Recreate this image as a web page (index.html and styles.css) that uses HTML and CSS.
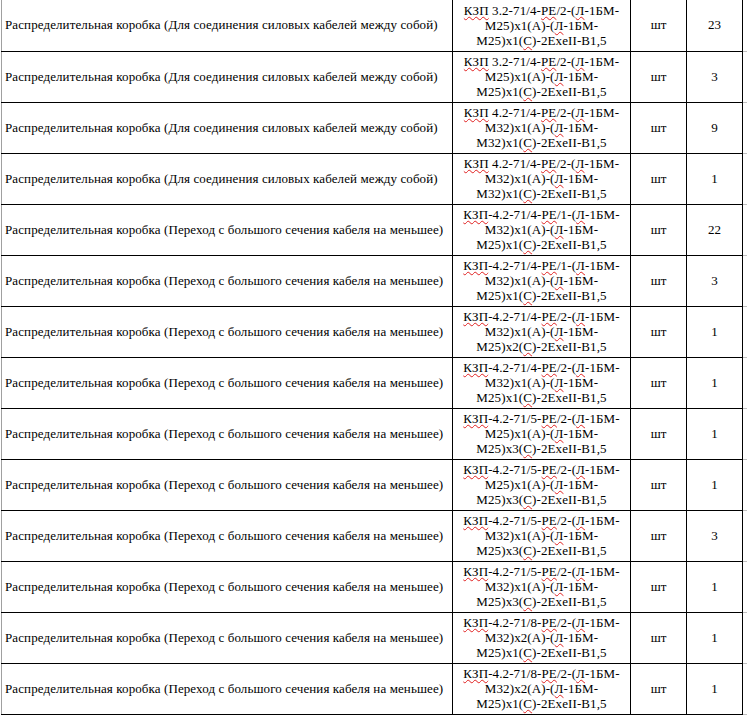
FILE: index.html
```html
<!DOCTYPE html>
<html lang="ru">
<head>
    <meta charset="UTF-8">
    <title>Спецификация</title>
    <link rel="stylesheet" href="styles.css">
</head>
<body>
    <table class="spec">
        <colgroup>
            <col class="c-name">
            <col class="c-code">
            <col class="c-unit">
            <col class="c-qty">
            <col class="c-tail">
        </colgroup>
        <tbody>
            <tr>
                <td class="name">Распределительная коробка (Для соединения силовых кабелей между собой)</td>
                <td class="code"><span class="sp">КЗП</span> 3.2-71/4-<span class="sp">РЕ</span>/2-(<span class="sp">Л</span>-1БМ-<br>М25)х1(А)-(<span class="sp">Л</span>-1БМ-<br>М25)х1(<span class="sp">С</span>)-2ExeII-B1,5</td>
                <td class="unit">шт</td>
                <td class="qty">23</td>
                <td class="tail"></td>
            </tr>
            <tr>
                <td class="name">Распределительная коробка (Для соединения силовых кабелей между собой)</td>
                <td class="code"><span class="sp">КЗП</span> 3.2-71/4-<span class="sp">РЕ</span>/2-(<span class="sp">Л</span>-1БМ-<br>М25)х1(А)-(<span class="sp">Л</span>-1БМ-<br>М25)х1(<span class="sp">С</span>)-2ExeII-B1,5</td>
                <td class="unit">шт</td>
                <td class="qty">3</td>
                <td class="tail"></td>
            </tr>
            <tr>
                <td class="name">Распределительная коробка (Для соединения силовых кабелей между собой)</td>
                <td class="code"><span class="sp">КЗП</span> 4.2-71/4-<span class="sp">РЕ</span>/2-(<span class="sp">Л</span>-1БМ-<br>М32)х1(А)-(<span class="sp">Л</span>-1БМ-<br>М32)х1(<span class="sp">С</span>)-2ExeII-B1,5</td>
                <td class="unit">шт</td>
                <td class="qty">9</td>
                <td class="tail"></td>
            </tr>
            <tr>
                <td class="name">Распределительная коробка (Для соединения силовых кабелей между собой)</td>
                <td class="code"><span class="sp">КЗП</span> 4.2-71/4-<span class="sp">РЕ</span>/2-(<span class="sp">Л</span>-1БМ-<br>М32)х1(А)-(<span class="sp">Л</span>-1БМ-<br>М32)х1(<span class="sp">С</span>)-2ExeII-B1,5</td>
                <td class="unit">шт</td>
                <td class="qty">1</td>
                <td class="tail"></td>
            </tr>
            <tr>
                <td class="name">Распределительная коробка (Переход с большого сечения кабеля на меньшее)</td>
                <td class="code"><span class="sp">КЗП</span>-4.2-71/4-<span class="sp">РЕ</span>/1-(<span class="sp">Л</span>-1БМ-<br>М32)х1(А)-(<span class="sp">Л</span>-1БМ-<br>М25)х1(<span class="sp">С</span>)-2ExeII-B1,5</td>
                <td class="unit">шт</td>
                <td class="qty">22</td>
                <td class="tail"></td>
            </tr>
            <tr>
                <td class="name">Распределительная коробка (Переход с большого сечения кабеля на меньшее)</td>
                <td class="code"><span class="sp">КЗП</span>-4.2-71/4-<span class="sp">РЕ</span>/1-(<span class="sp">Л</span>-1БМ-<br>М32)х1(А)-(<span class="sp">Л</span>-1БМ-<br>М25)х1(<span class="sp">С</span>)-2ExeII-B1,5</td>
                <td class="unit">шт</td>
                <td class="qty">3</td>
                <td class="tail"></td>
            </tr>
            <tr>
                <td class="name">Распределительная коробка (Переход с большого сечения кабеля на меньшее)</td>
                <td class="code"><span class="sp">КЗП</span>-4.2-71/4-<span class="sp">РЕ</span>/2-(<span class="sp">Л</span>-1БМ-<br>М32)х1(А)-(<span class="sp">Л</span>-1БМ-<br>М25)х2(<span class="sp">С</span>)-2ExeII-B1,5</td>
                <td class="unit">шт</td>
                <td class="qty">1</td>
                <td class="tail"></td>
            </tr>
            <tr>
                <td class="name">Распределительная коробка (Переход с большого сечения кабеля на меньшее)</td>
                <td class="code"><span class="sp">КЗП</span>-4.2-71/4-<span class="sp">РЕ</span>/2-(<span class="sp">Л</span>-1БМ-<br>М32)х1(А)-(<span class="sp">Л</span>-1БМ-<br>М25)х1(<span class="sp">С</span>)-2ExeII-B1,5</td>
                <td class="unit">шт</td>
                <td class="qty">1</td>
                <td class="tail"></td>
            </tr>
            <tr>
                <td class="name">Распределительная коробка (Переход с большого сечения кабеля на меньшее)</td>
                <td class="code"><span class="sp">КЗП</span>-4.2-71/5-<span class="sp">РЕ</span>/2-(<span class="sp">Л</span>-1БМ-<br>М25)х1(А)-(<span class="sp">Л</span>-1БМ-<br>М25)х3(<span class="sp">С</span>)-2ExeII-B1,5</td>
                <td class="unit">шт</td>
                <td class="qty">1</td>
                <td class="tail"></td>
            </tr>
            <tr>
                <td class="name">Распределительная коробка (Переход с большого сечения кабеля на меньшее)</td>
                <td class="code"><span class="sp">КЗП</span>-4.2-71/5-<span class="sp">РЕ</span>/2-(<span class="sp">Л</span>-1БМ-<br>М25)х1(А)-(<span class="sp">Л</span>-1БМ-<br>М25)х3(<span class="sp">С</span>)-2ExeII-B1,5</td>
                <td class="unit">шт</td>
                <td class="qty">1</td>
                <td class="tail"></td>
            </tr>
            <tr>
                <td class="name">Распределительная коробка (Переход с большого сечения кабеля на меньшее)</td>
                <td class="code"><span class="sp">КЗП</span>-4.2-71/5-<span class="sp">РЕ</span>/2-(<span class="sp">Л</span>-1БМ-<br>М32)х1(А)-(<span class="sp">Л</span>-1БМ-<br>М25)х3(<span class="sp">С</span>)-2ExeII-B1,5</td>
                <td class="unit">шт</td>
                <td class="qty">3</td>
                <td class="tail"></td>
            </tr>
            <tr>
                <td class="name">Распределительная коробка (Переход с большого сечения кабеля на меньшее)</td>
                <td class="code"><span class="sp">КЗП</span>-4.2-71/5-<span class="sp">РЕ</span>/2-(<span class="sp">Л</span>-1БМ-<br>М32)х1(А)-(<span class="sp">Л</span>-1БМ-<br>М25)х3(<span class="sp">С</span>)-2ExeII-B1,5</td>
                <td class="unit">шт</td>
                <td class="qty">1</td>
                <td class="tail"></td>
            </tr>
            <tr>
                <td class="name">Распределительная коробка (Переход с большого сечения кабеля на меньшее)</td>
                <td class="code"><span class="sp">КЗП</span>-4.2-71/8-<span class="sp">РЕ</span>/2-(<span class="sp">Л</span>-1БМ-<br>М32)х2(А)-(<span class="sp">Л</span>-1БМ-<br>М25)х1(<span class="sp">С</span>)-2ExeII-B1,5</td>
                <td class="unit">шт</td>
                <td class="qty">1</td>
                <td class="tail"></td>
            </tr>
            <tr>
                <td class="name">Распределительная коробка (Переход с большого сечения кабеля на меньшее)</td>
                <td class="code"><span class="sp">КЗП</span>-4.2-71/8-<span class="sp">РЕ</span>/2-(<span class="sp">Л</span>-1БМ-<br>М32)х2(А)-(<span class="sp">Л</span>-1БМ-<br>М25)х1(<span class="sp">С</span>)-2ExeII-B1,5</td>
                <td class="unit">шт</td>
                <td class="qty">1</td>
                <td class="tail"></td>
            </tr>
        </tbody>
    </table>
</body>
</html>
```

FILE: styles.css
```css
* {
    box-sizing: border-box;
}

body {
    margin: 0 0 0 1px;
    background-color: #fff;
    color: #000;
    font-family: 'Liberation Serif', 'Times New Roman', serif;
    font-size: 13px;
}

.spec {
    border-collapse: collapse;
    table-layout: fixed;
    width: 746px;
}

.c-name { width: 451px; }
.c-code { width: 178px; }
.c-unit { width: 56px; }
.c-qty { width: 56px; }
.c-tail { width: 5px; }

.spec td {
    height: 51px;
    padding: 0 3px;
    border: 1px solid #000;
    vertical-align: middle;
}

.spec tr:first-child td {
    border-top: none;
}

.spec td.name {
    border-left: 1px solid #a0a0a0;
    padding-left: 3px;
    white-space: nowrap;
    letter-spacing: 0.1px;
}

.spec td.code {
    text-align: center;
    line-height: 15px;
    white-space: nowrap;
    letter-spacing: 0.1px;
}

.spec td.unit,
.spec td.qty {
    text-align: center;
}

.spec td.tail {
    padding: 0;
    border-top: none;
    border-right: none;
    border-bottom: 1px solid #c0c0c0;
}

.sp {
    text-decoration: underline wavy #e02020;
    text-decoration-thickness: 1px;
    text-decoration-skip-ink: none;
    text-underline-offset: 1px;
}
```
